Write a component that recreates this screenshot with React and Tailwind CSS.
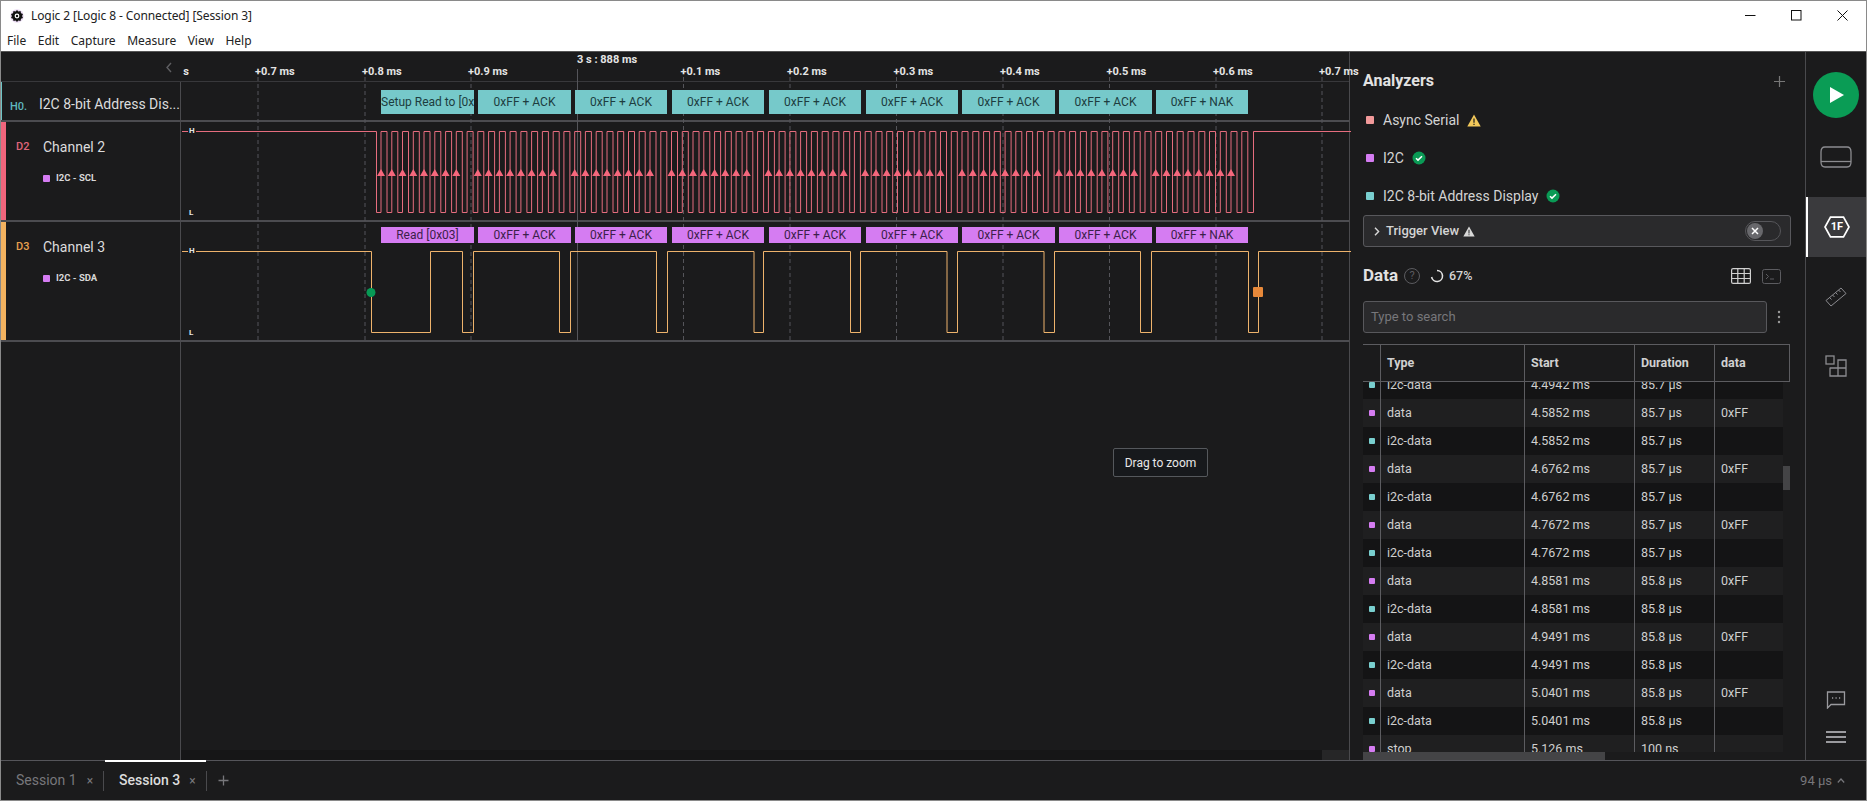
import React from "react";

const ticks = [150.5, 257, 364, 470, 576.5, 682.5, 789, 895.5, 1002, 1108.5, 1215, 1321];
const tickLabels = ["+0.7 ms", "+0.8 ms", "+0.9 ms", null, "+0.1 ms", "+0.2 ms", "+0.3 ms", "+0.4 ms", "+0.5 ms", "+0.6 ms", "+0.7 ms"];
const spans = [[380,473],[477,570],[574,666],[671,763],[768,860],[865,957],[961,1054],[1058,1151],[1155,1247]];
const labels = ["0xFF + ACK","0xFF + ACK","0xFF + ACK","0xFF + ACK","0xFF + ACK","0xFF + ACK","0xFF + ACK","0xFF + NAK"];

function sclPath() {
  const hi = 130.5, lo = 211.5;
  let d = `M181 ${hi}H375.5V${lo}`;
  for (let i = 0; i < 81; i++) {
    const x = 380 + i * 10.76;
    d += `H${x.toFixed(1)}V${hi}H${(x + 6).toFixed(1)}V${lo}`;
  }
  d += `H1252.5V${hi}H1350`;
  return d;
}
function sdaPath() {
  const hi = 250.5, lo = 331.5;
  const e = [370.5,429.5,461.5,472.5,558.5,569.5,655.5,666.5,753,762.5,849.5,859.5,946,956.5,1043,1053.5,1139.5,1150.5,1247.5,1257.5];
  let d = `M181 ${hi}`;
  e.forEach((x, i) => { d += `H${x}V${i % 2 === 0 ? lo : hi}`; });
  d += "H1350";
  return d;
}
function arrows() {
  const out = [];
  for (let i = 0; i < 81; i++) {
    if (i % 9 === 8) continue;
    const x = 380 + i * 10.76;
    out.push(`M${(x - 4).toFixed(1)} 175L${x.toFixed(1)} 168L${(x + 4).toFixed(1)} 175Z`);
  }
  return out.join("");
}

function WaveDrawing() {
  return (
    <svg className="absolute left-[181px] top-[51px]" width="1169" height="291" viewBox="181 51 1169 291" fill="none">
      {ticks.map((x, i) => (
        <line key={i} x1={x} x2={x} y1={i === 4 ? 68 : 76} y2="340" stroke="#55555a" strokeWidth="1" strokeDasharray={i === 4 ? "none" : "4 3"} />
      ))}
      <path d={sclPath()} stroke="#e66d7e" strokeWidth="1" />
      <path d={arrows()} fill="#f5677c" />
      <path d={sdaPath()} stroke="#eeb36c" strokeWidth="1" />
      <circle cx="370" cy="291.5" r="4.5" fill="#079a55" />
      <rect x="1252" y="286" width="10" height="10" rx="1" fill="#e8893a" />
    </svg>
  );
}

function Bubble({ span, children, cls, textCls }) {
  return (
    <div className={`absolute flex items-center justify-center overflow-hidden whitespace-nowrap text-[12px] text-[#1d3d3f] ${cls}`} style={{ left: span[0], width: span[1] - span[0] }}>
      <span className={textCls}>{children}</span>
    </div>
  );
}

function Sq({ c, s = "w-[7px] h-[7px]" }) {
  return <span className={`inline-block rounded-[1px] shrink-0 ${s} ${c}`} />;
}

function Label({ tag, tagCls, title, sub, barCls, hCls }) {
  return (
    <div className={`relative flex w-[180px] shrink-0 border-r border-[#4a4a4d] ${hCls}`}>
      <div className={`w-[5px] shrink-0 ${barCls}`} />
      <div className="flex flex-col pl-[10px]">
        <div className="flex items-center h-[50px]">
          <span className={`w-[27px] text-[11px] font-medium ${tagCls}`}>{tag}</span>
          <span className="text-[14px] text-[#dcdcdc] whitespace-nowrap">{title}</span>
        </div>
        <div className="flex items-center gap-[6px] ml-[27px] -mt-[1px]">
          <Sq c="bg-[#d57cf2]" />
          <span className="text-[9.5px] font-bold text-[#d8d8d8]">{sub}</span>
        </div>
      </div>
    </div>
  );
}

const rows = [
  ["i2c", "i2c-data", "4.4942 ms", "85.7 µs", ""],
  ["d", "data", "4.5852 ms", "85.7 µs", "0xFF"],
  ["i2c", "i2c-data", "4.5852 ms", "85.7 µs", ""],
  ["d", "data", "4.6762 ms", "85.7 µs", "0xFF"],
  ["i2c", "i2c-data", "4.6762 ms", "85.7 µs", ""],
  ["d", "data", "4.7672 ms", "85.7 µs", "0xFF"],
  ["i2c", "i2c-data", "4.7672 ms", "85.7 µs", ""],
  ["d", "data", "4.8581 ms", "85.8 µs", "0xFF"],
  ["i2c", "i2c-data", "4.8581 ms", "85.8 µs", ""],
  ["d", "data", "4.9491 ms", "85.8 µs", "0xFF"],
  ["i2c", "i2c-data", "4.9491 ms", "85.8 µs", ""],
  ["d", "data", "5.0401 ms", "85.8 µs", "0xFF"],
  ["i2c", "i2c-data", "5.0401 ms", "85.8 µs", ""],
  ["d", "stop", "5.126 ms", "100 ns", ""],
];

function CheckBadge() {
  return (
    <svg width="14" height="14" viewBox="0 0 14 14">
      <circle cx="7" cy="7" r="6.5" fill="#0a9a55" />
      <path d="M4 7.2l2 1.9 4-3.8" stroke="#fff" strokeWidth="1.5" fill="none" />
    </svg>
  );
}
function Warn({ fill = "#f3c95a", mark = "#1b1b1c", w = 14, h = 13 }) {
  return (
    <svg width={w} height={h} viewBox="0 0 14 13">
      <path d="M7 .5L13.7 12.5H.3Z" fill={fill} />
      <path d="M6.4 4.5h1.2v4.3H6.4zM6.4 9.7h1.2v1.3H6.4z" fill={mark} />
    </svg>
  );
}

function App() {
  return (
    <div className="relative w-[1867px] h-[801px] flex flex-col overflow-hidden bg-[#1b1b1c] border-t border-l border-r border-b border-[#8a8a8a] font-['Roboto',sans-serif]">
      {/* title bar */}
      <div className="h-[50px] shrink-0 bg-white flex flex-col text-[#222] font-['Noto_Sans',sans-serif] text-[12px]">
        <div className="flex items-center h-[29px] pl-[9px]">
          <svg width="14" height="14" viewBox="0 0 14 14" className="mr-[7px]">
            <circle cx="7" cy="7" r="6.8" fill="#e9d9f2" />
            <path d="M7 1l1.4 1.6 2.1-.5.5 2.1 2 .8-.9 2 .9 2-2 .8-.5 2.1-2.1-.5L7 13l-1.4-1.6-2.1.5-.5-2.1-2-.8.9-2-.9-2 2-.8.5-2.1 2.1.5Z" fill="#111" />
            <circle cx="7" cy="7" r="2.4" fill="#fff" />
            <circle cx="7" cy="7" r="1.2" fill="#111" />
          </svg>
          <span className="whitespace-nowrap tracking-[-0.1px]">Logic 2 [Logic 8 - Connected] [Session 3]</span>
          <div className="ml-auto flex items-center pr-[18px] gap-[35px]">
            <svg width="11" height="11" viewBox="0 0 11 11"><path d="M0 5.5h10.5" stroke="#111" /></svg>
            <svg width="11" height="11" viewBox="0 0 11 11"><rect x=".5" y=".5" width="9.5" height="9.5" fill="none" stroke="#111" /></svg>
            <svg width="11" height="11" viewBox="0 0 11 11"><path d="M.5.5l10 10M10.5.5l-10 10" stroke="#111" /></svg>
          </div>
        </div>
        <div className="flex items-center h-[21px] pl-[6px] gap-[11.5px] text-[#222]">
          <span>File</span><span>Edit</span><span>Capture</span><span>Measure</span><span>View</span><span>Help</span>
        </div>
      </div>

      {/* body */}
      <div className="flex h-[709px] shrink-0 border-t border-[#555]">
        {/* main waves */}
        <div className="flex flex-col w-[1349px] shrink-0 border-r border-[#4a4a4d]">
          <div className="relative h-[30px] shrink-0 border-b border-[#38383b] overflow-hidden">
            <svg className="absolute left-[165px] top-[10px]" width="6" height="11" viewBox="0 0 6 11" fill="none"><path d="M5 1L1 5.5L5 10" stroke="#5f5f62" strokeWidth="1.4" /></svg>
          </div>
          <div className="flex h-[40px] shrink-0 border-b-2 border-[#4c4c50]">
            <div className="flex w-[180px] shrink-0 border-r border-[#4a4a4d]">
              <div className="w-[5px] bg-[#6fc5c6]" />
              <div className="flex items-end pb-[5px] pl-[8px]">
                <span className="w-[29px] text-[11px] font-medium text-[#5fb7bf]">H0.</span>
                <span className="text-[14px] text-[#dcdcdc] whitespace-nowrap">I2C 8-bit Address Dis...</span>
              </div>
            </div>
          </div>
          <div className="flex h-[100px] shrink-0 border-b-2 border-[#4c4c50]">
            <Label tag="D2" tagCls="text-[#e0657a]" title="Channel 2" sub="I2C - SCL" barCls="bg-[#f0657c]" hCls="" />
          </div>
          <div className="flex h-[120px] shrink-0 border-b-2 border-[#4c4c50]">
            <Label tag="D3" tagCls="text-[#e8a04e]" title="Channel 3" sub="I2C - SDA" barCls="bg-[#f3b25f]" hCls="" />
          </div>
          <div className="flex flex-1 min-h-0">
            <div className="w-[180px] shrink-0 border-r border-[#4a4a4d]" />
            <div className="flex-1 flex flex-col justify-end">
              <div className="h-[10px] bg-[#161617] flex justify-end">
                <div className="w-[27px] bg-[#262627]" />
              </div>
            </div>
          </div>
        </div>

        {/* right panel */}
        <div className="flex flex-col w-[456px] shrink-0 border-r border-[#4a4a4d] pl-[13px] overflow-hidden">
          <div className="flex items-center justify-between h-[30px] mt-[14px] pr-[20px]">
            <span className="text-[16px] font-bold text-[#e2e2e2]">Analyzers</span>
            <svg width="11" height="11" viewBox="0 0 11 11"><path d="M5.5 0v11M0 5.5h11" stroke="#777" strokeWidth="1.2" /></svg>
          </div>
          <div className="flex flex-col gap-[18px] mt-[14px] pl-[3px]">
            <div className="flex items-center h-[20px]"><Sq c="bg-[#f29a9a]" s="w-[8px] h-[8px]" /><span className="ml-[9px] text-[14px] text-[#d4d4d4]">Async Serial</span><span className="ml-[8px] flex"><Warn /></span></div>
            <div className="flex items-center h-[20px]"><Sq c="bg-[#d57cf2]" s="w-[8px] h-[8px]" /><span className="ml-[9px] text-[14px] text-[#d4d4d4]">I2C</span><span className="ml-[8px] flex"><CheckBadge /></span></div>
            <div className="flex items-center h-[20px]"><Sq c="bg-[#79cfcf]" s="w-[8px] h-[8px]" /><span className="ml-[9px] text-[14px] text-[#d4d4d4]">I2C 8-bit Address Display</span><span className="ml-[8px] flex"><CheckBadge /></span></div>
          </div>
          <div className="flex items-center h-[32px] w-[428px] mt-[9px] pl-[10px] pr-[9px] bg-[#2a2a2c] border border-[#58585c] rounded-[3px]">
            <svg width="6" height="9" viewBox="0 0 6 9" fill="none"><path d="M1 .8L4.6 4.5L1 8.2" stroke="#d8d8d8" strokeWidth="1.4" /></svg>
            <span className="ml-[6px] text-[13px] font-medium text-[#d4d4d4]">Trigger View</span>
            <span className="ml-[4px] flex"><Warn fill="#d8d8d8" mark="#2a2a2c" w="12" h="11" /></span>
            <div className="ml-auto flex items-center w-[36px] h-[20px] rounded-full border border-[#56565a] pl-[1px]">
              <div className="flex items-center justify-center w-[16px] h-[16px] rounded-full bg-[#68686c]">
                <svg width="8" height="8" viewBox="0 0 8 8"><path d="M1 1l6 6M7 1L1 7" stroke="#fff" strokeWidth="1.5" /></svg>
              </div>
            </div>
          </div>
          <div className="flex items-center h-[30px] mt-[14px] pr-[24px]">
            <span className="text-[17px] font-bold text-[#e2e2e2] w-[41px]">Data</span>
            <span className="flex items-center justify-center w-[16px] h-[16px] rounded-full border border-[#5c5c60] text-[11px] text-[#5c5c60]">?</span>
            <svg width="14" height="14" viewBox="0 0 14 14" fill="none" className="ml-[10px]"><path d="M7 1.5A5.5 5.5 0 1 1 1.6 8" stroke="#e4e4e4" strokeWidth="1.6" /></svg>
            <span className="ml-[5px] text-[12.5px] font-medium text-[#d4d4d4]">67%</span>
            <svg width="20" height="16" viewBox="0 0 20 16" fill="none" className="ml-auto" stroke="#d0d0d0" strokeWidth="1.2"><rect x=".6" y=".6" width="18.8" height="14.8" rx="1.5" /><path d="M.6 5.5h18.8M.6 10.5h18.8M6.8.6v14.8M13.2.6v14.8" /></svg>
            <svg width="19" height="15" viewBox="0 0 19 15" fill="none" className="ml-[11px]" stroke="#5c5c60" strokeWidth="1"><rect x=".5" y=".5" width="18" height="14" rx="2" /><path d="M4 5l2.5 2.5L4 10M8 10h4" /></svg>
          </div>
          <div className="flex items-center mt-[10px]">
            <div className="flex items-center w-[404px] h-[32px] bg-[#2a2a2c] border border-[#58585c] rounded-[3px] pl-[7px] text-[13px] text-[#77777b]">Type to search</div>
            <svg width="4" height="14" viewBox="0 0 4 14" className="ml-[10px]"><circle cx="2" cy="2" r="1.2" fill="#999" /><circle cx="2" cy="7" r="1.2" fill="#999" /><circle cx="2" cy="12" r="1.2" fill="#999" /></svg>
          </div>
          {/* table */}
          <div className="relative flex flex-col mt-[11px] w-[428px] flex-1 min-h-0">
            <div className="flex h-[38px] shrink-0 border-t border-b border-r border-[#5c5c60] w-[427px] text-[12.5px] font-bold text-[#d0d0d0]">
              <div className="w-[17px] shrink-0" />
              <div className="w-[144px] shrink-0 border-l border-[#5c5c60] pl-[6px] flex items-center">Type</div>
              <div className="w-[110px] shrink-0 border-l border-[#5c5c60] pl-[6px] flex items-center">Start</div>
              <div className="w-[80px] shrink-0 border-l border-[#5c5c60] pl-[6px] flex items-center">Duration</div>
              <div className="flex-1 border-l border-[#5c5c60] pl-[6px] flex items-center">data</div>
            </div>
            <div className="flex-1 min-h-0 overflow-hidden">
              <div className="-mt-[11px]">
                {rows.map((r, i) => (
                  <div key={i} className={`flex h-[28px] w-[420px] text-[12.5px] text-[#cfcfcf] ${i % 2 === 0 ? "bg-[#141415]" : "bg-[#1f1f20]"}`}>
                    <div className="w-[17px] shrink-0 flex items-center pl-[6px]"><Sq c={r[0] === "i2c" ? "bg-[#79cfcf]" : "bg-[#d57cf2]"} s="w-[6px] h-[6px]" /></div>
                    <div className="w-[144px] shrink-0 border-l border-[#5c5c60] pl-[6px] flex items-center">{r[1]}</div>
                    <div className="w-[110px] shrink-0 border-l border-[#5c5c60] pl-[6px] flex items-center">{r[2]}</div>
                    <div className="w-[80px] shrink-0 border-l border-[#5c5c60] pl-[6px] flex items-center">{r[3]}</div>
                    <div className="flex-1 border-l border-[#5c5c60] pl-[6px] flex items-center">{r[4]}</div>
                  </div>
                ))}
              </div>
            </div>
            <div className="h-[8px] shrink-0 w-[242px] bg-[#444446]" />
            <div className="absolute left-[420px] top-[122px] w-[7px] h-[24px] bg-[#444446]" />
          </div>
        </div>

        {/* sidebar */}
        <div className="flex flex-col items-center flex-1 pt-[20px]">
          <div className="flex items-center justify-center w-[46px] h-[46px] rounded-full bg-[#0a9c55] shrink-0">
            <svg width="14" height="16" viewBox="0 0 14 16" className="ml-[2px]"><path d="M0 0L14 8L0 16Z" fill="#fff" /></svg>
          </div>
          <svg width="32" height="22" viewBox="0 0 32 22" fill="none" stroke="#8c8c90" strokeWidth="1.3" className="mt-[28px]">
            <path d="M5 1h22q4 0 4 5v10q0 5-4 5H5q-4 0-4-5V6q0-5 4-5Z" />
            <path d="M1 15.5h30" />
          </svg>
          <div className="relative flex items-center justify-center self-stretch h-[60px] mt-[29px] bg-[#3a3a3d] border-l-2 border-white">
            <svg width="26" height="22" viewBox="0 0 26 22" fill="none"><path d="M6.5 1.2h13L25 11l-5.500 9.800h-13L1 11Z" stroke="#fff" strokeWidth="1.700" /></svg>
            <span className="absolute text-[11px] font-bold text-white">1F</span>
          </div>
          <svg width="22" height="22" viewBox="0 0 22 22" fill="none" stroke="#8c8c90" strokeWidth="1" className="mt-[28px]">
            <path d="M1 15.500L16 3l5 5.500L6 21Z" />
            <path d="M4.500 12.500l2 2M7.500 10l2 2M10.500 7.500l2 2M13.500 5l2 2" />
          </svg>
          <svg width="22" height="22" viewBox="0 0 22 22" fill="none" stroke="#8c8c90" strokeWidth="1.300" className="mt-[48px]">
            <rect x="1" y="1" width="8" height="8" />
            <path d="M5 12.500v8.500h16V5h-8v16M5 13h16" />
          </svg>
          <svg width="20" height="18" viewBox="0 0 20 18" fill="none" stroke="#9a9a9e" strokeWidth="1.300" className="mt-auto">
            <path d="M1.500 1h17v12.500H5L1.500 17Z" />
            <path d="M6 7h1.200M9.500 7h1.200M13 7h1.200" />
          </svg>
          <div className="flex flex-col gap-[3px] mt-[22px] mb-[17px] w-[20px]">
            <div className="h-[2px] bg-[#9a9a9e]" />
            <div className="h-[2px] bg-[#9a9a9e]" />
            <div className="h-[2px] bg-[#9a9a9e]" />
          </div>
        </div>
      </div>

      {/* bottom tabs */}
      <div className="relative flex items-center flex-1 border-t border-[#55555a] text-[14px]">
        <div className="absolute left-[104px] -top-[1px] w-[101px] h-[2px] bg-white" />
        <span className="ml-[15px] text-[#77777b]">Session 1</span>
        <span className="ml-[10px] text-[12px] text-[#77777b]">×</span>
        <div className="ml-[10px] w-px h-[20px] bg-[#4a4a4d]" />
        <span className="ml-[15px] font-medium text-[#dcdcdc]">Session 3</span>
        <span className="ml-[9px] text-[12px] text-[#77777b]">×</span>
        <div className="ml-[10px] w-px h-[20px] bg-[#4a4a4d]" />
        <svg width="11" height="11" viewBox="0 0 11 11" className="ml-[11px]"><path d="M5.500 .5v10M.5 5.500h10" stroke="#77777b" strokeWidth="1.300" /></svg>
        <span className="ml-auto text-[13px] text-[#77777b]">94 µs</span>
        <svg width="8" height="5" viewBox="0 0 8 5" fill="none" className="ml-[5px] mr-[21px]"><path d="M.8 4.500L4 1l3.200 3.500" stroke="#77777b" strokeWidth="1.200" /></svg>
      </div>

      {/* waveform canvas, bubbles and labels placed by time */}
      <WaveDrawing />
      <span className="absolute left-[181px] top-[64px] w-[7px] overflow-hidden text-[11px] font-bold text-[#e4e4e4] leading-[14px] flex justify-end">s</span>
      {tickLabels.map((t, i) => t && (
        <span key={i} className="absolute top-[64px] text-[11px] leading-[14px] font-bold text-[#e4e4e4] whitespace-nowrap" style={{ left: ticks[i + 1] - 3 }}>{t}</span>
      ))}
      <span className="absolute left-[576px] top-[52px] text-[11px] leading-[14px] font-bold text-[#e4e4e4] whitespace-nowrap">3 s : 888 ms</span>
      <span className="absolute left-[187px] top-[124px] px-[1px] bg-[#1b1b1c] text-[8px] leading-[12px] font-bold text-[#e4e4e4]">H</span>
      <span className="absolute left-[187px] top-[206px] px-[1px] text-[8px] leading-[12px] font-bold text-[#e4e4e4]">L</span>
      <span className="absolute left-[187px] top-[244px] px-[1px] bg-[#1b1b1c] text-[8px] leading-[12px] font-bold text-[#e4e4e4]">H</span>
      <span className="absolute left-[187px] top-[326px] px-[1px] text-[8px] leading-[12px] font-bold text-[#e4e4e4]">L</span>
      <div className="absolute left-0 top-[89px] h-[24px] w-0">
        <Bubble span={spans[0]} cls="h-[24px] bg-[#76c9ca] !justify-start">Setup Read to [0x03]</Bubble>
        {labels.map((l, i) => <Bubble key={i} span={spans[i + 1]} cls="h-[24px] bg-[#76c9ca]">{l}</Bubble>)}
      </div>
      <div className="absolute left-0 top-[226px] h-[16px] w-0">
        <Bubble span={spans[0]} cls="h-[16px] bg-[#d57cf2] !text-[#3c1f4a]">Read [0x03]</Bubble>
        {labels.map((l, i) => <Bubble key={i} span={spans[i + 1]} cls="h-[16px] bg-[#d57cf2] !text-[#3c1f4a]">{l}</Bubble>)}
      </div>
      <div className="absolute left-[1112px] top-[447px] flex items-center justify-center w-[95px] h-[29px] rounded-[2px] bg-[#17191c] border border-[#55585c] text-[12px] text-[#e8e8e8]">Drag to zoom</div>
    </div>
  );
}

export default App;
